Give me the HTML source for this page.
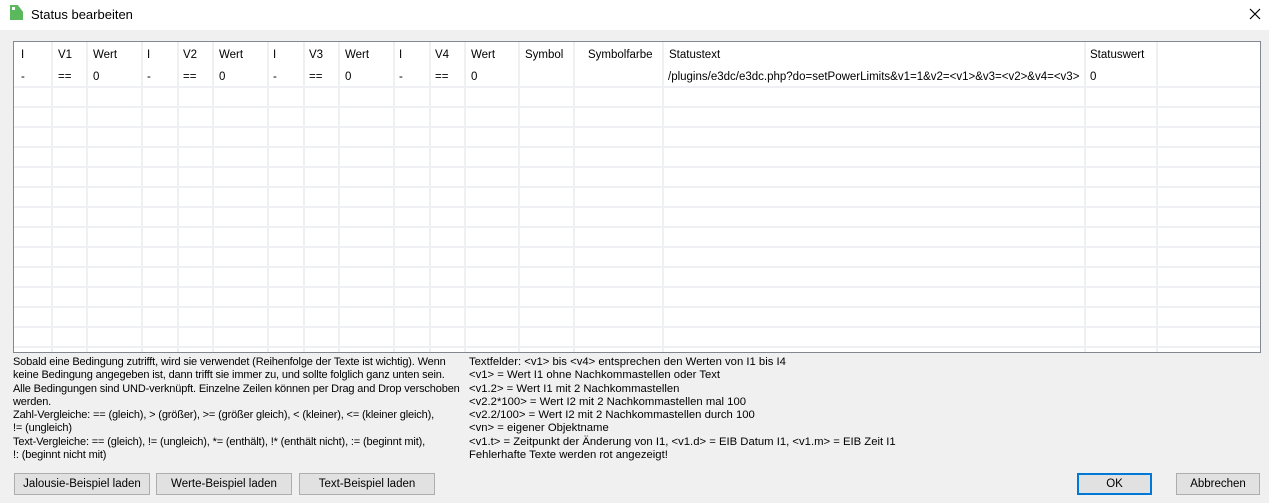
<!DOCTYPE html>
<html><head><style>
body{margin:0;width:1269px;height:503px;background:#f0f0f0;font-family:"Liberation Sans",sans-serif;font-size:11.5px;color:#000;position:relative;overflow:hidden}
.title{position:absolute;left:0;top:0;width:1269px;height:30px;background:#fff}
.ab{position:absolute}
.grid{position:absolute;left:13px;top:41px;width:1246px;height:310px;border:1px solid #828790;background:#fff;overflow:hidden}
.vl{position:absolute;top:0;bottom:0;width:2px;background:#eef0f4}
.hl{position:absolute;left:0;right:0;height:2px;background:#eef0f4}
.t{position:absolute;white-space:nowrap}
.btn{position:absolute;top:473px;height:20px;border:1px solid #adadad;background:#e1e1e1;text-align:center;line-height:20px;font-size:11.5px}
.txt{position:absolute;top:356px;line-height:13.3px;font-size:11.3px;white-space:nowrap}
</style></head><body>
<div class="title"></div>
<div class="ab" style="left:10px;top:5px;width:13px;height:15px;background:#5cb85c;clip-path:polygon(0 0,60% 0,100% 45%,100% 100%,0 100%)"></div>
<div class="ab" style="left:12px;top:7px;width:3px;height:3px;background:#fff"></div>
<div class="t" style="left:31px;top:7px;font-size:13px">Status bearbeiten</div>
<svg class="ab" style="left:1249px;top:8px" width="12" height="12"><path d="M1 1L11 11M11 1L1 11" stroke="#000" stroke-width="1.2"/></svg>
<div class="grid">
<div class="hl" style="top:44px"></div><div class="hl" style="top:64px"></div><div class="hl" style="top:84px"></div><div class="hl" style="top:104px"></div><div class="hl" style="top:124px"></div><div class="hl" style="top:144px"></div><div class="hl" style="top:164px"></div><div class="hl" style="top:184px"></div><div class="hl" style="top:204px"></div><div class="hl" style="top:224px"></div><div class="hl" style="top:244px"></div><div class="hl" style="top:264px"></div><div class="hl" style="top:284px"></div><div class="hl" style="top:304px"></div>
<div class="vl" style="left:37px"></div><div class="vl" style="left:72px"></div><div class="vl" style="left:127px"></div><div class="vl" style="left:163px"></div><div class="vl" style="left:198px"></div><div class="vl" style="left:253px"></div><div class="vl" style="left:289px"></div><div class="vl" style="left:324px"></div><div class="vl" style="left:379px"></div><div class="vl" style="left:415px"></div><div class="vl" style="left:450px"></div><div class="vl" style="left:504px"></div><div class="vl" style="left:559px"></div><div class="vl" style="left:648px"></div><div class="vl" style="left:1070px"></div><div class="vl" style="left:1142px"></div>
<div class="t" style="left:7px;top:7px">I</div><div class="t" style="left:44px;top:7px">V1</div><div class="t" style="left:79px;top:7px">Wert</div>
<div class="t" style="left:133px;top:7px">I</div><div class="t" style="left:169px;top:7px">V2</div><div class="t" style="left:205px;top:7px">Wert</div>
<div class="t" style="left:259px;top:7px">I</div><div class="t" style="left:295px;top:7px">V3</div><div class="t" style="left:331px;top:7px">Wert</div>
<div class="t" style="left:385px;top:7px">I</div><div class="t" style="left:421px;top:7px">V4</div><div class="t" style="left:457px;top:7px">Wert</div>
<div class="t" style="left:511px;top:7px">Symbol</div><div class="t" style="left:574px;top:7px">Symbolfarbe</div><div class="t" style="left:655px;top:7px">Statustext</div><div class="t" style="left:1076px;top:7px">Statuswert</div>
<div class="t" style="left:7px;top:29px">-</div><div class="t" style="left:44px;top:29px">==</div><div class="t" style="left:79px;top:29px">0</div>
<div class="t" style="left:133px;top:29px">-</div><div class="t" style="left:169px;top:29px">==</div><div class="t" style="left:205px;top:29px">0</div>
<div class="t" style="left:259px;top:29px">-</div><div class="t" style="left:295px;top:29px">==</div><div class="t" style="left:331px;top:29px">0</div>
<div class="t" style="left:385px;top:29px">-</div><div class="t" style="left:421px;top:29px">==</div><div class="t" style="left:457px;top:29px">0</div>
<div class="t" style="left:654px;top:29px">/plugins/e3dc/e3dc.php?do=setPowerLimits&amp;v1=1&amp;v2=&lt;v1&gt;&amp;v3=&lt;v2&gt;&amp;v4=&lt;v3&gt;</div>
<div class="t" style="left:1076px;top:29px">0</div>
</div>
<div class="txt" style="left:13px;font-size:11px;letter-spacing:-0.15px">Sobald eine Bedingung zutrifft, wird sie verwendet (Reihenfolge der Texte ist wichtig). Wenn<br>keine Bedingung angegeben ist, dann trifft sie immer zu, und sollte folglich ganz unten sein.<br>Alle Bedingungen sind UND-verknüpft. Einzelne Zeilen können per Drag and Drop verschoben<br>werden.<br>Zahl-Vergleiche: == (gleich), &gt; (größer), &gt;= (größer gleich), &lt; (kleiner), &lt;= (kleiner gleich),<br>!= (ungleich)<br>Text-Vergleiche: == (gleich), != (ungleich), *= (enthält), !* (enthält nicht), := (beginnt mit),<br>!: (beginnt nicht mit)</div>
<div class="txt" style="left:469px">Textfelder: &lt;v1&gt; bis &lt;v4&gt; entsprechen den Werten von I1 bis I4<br>&lt;v1&gt; = Wert I1 ohne Nachkommastellen oder Text<br>&lt;v1.2&gt; = Wert I1 mit 2 Nachkommastellen<br>&lt;v2.2*100&gt; = Wert I2 mit 2 Nachkommastellen mal 100<br>&lt;v2.2/100&gt; = Wert I2 mit 2 Nachkommastellen durch 100<br>&lt;vn&gt; = eigener Objektname<br>&lt;v1.t&gt; = Zeitpunkt der Änderung von I1, &lt;v1.d&gt; = EIB Datum I1, &lt;v1.m&gt; = EIB Zeit I1<br>Fehlerhafte Texte werden rot angezeigt!</div>
<div class="btn" style="left:14px;width:134px">Jalousie-Beispiel laden</div>
<div class="btn" style="left:156px;width:134px">Werte-Beispiel laden</div>
<div class="btn" style="left:299px;width:134px">Text-Beispiel laden</div>
<div class="btn" style="left:1077px;top:473px;width:71px;height:18px;border:2px solid #0078d7;line-height:18px">OK</div>
<div class="btn" style="left:1176px;width:82px">Abbrechen</div>
</body></html>
